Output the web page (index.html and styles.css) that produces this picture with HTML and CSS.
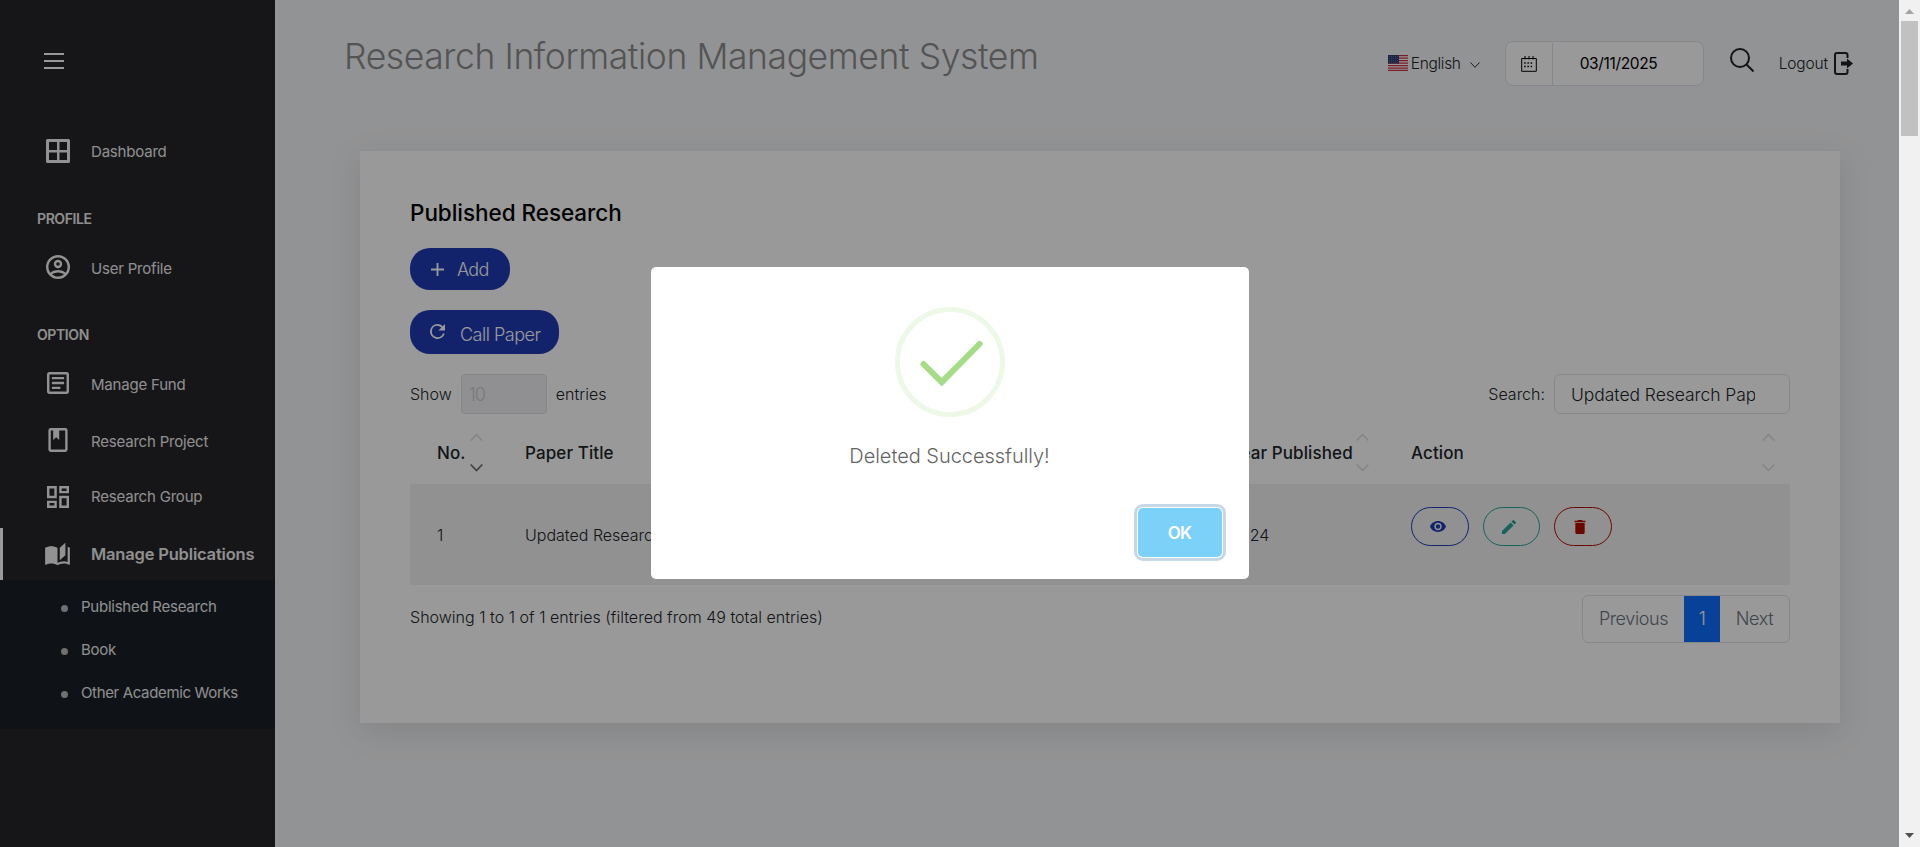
FILE: index.html
```html
<!DOCTYPE html>
<html lang="en">
<head>
<meta charset="utf-8">
<title>Research Information Management System</title>
<link rel="stylesheet" href="styles.css">
</head>
<body>
<div class="page">
  <aside class="sidebar">
    <div class="burger"><i></i><i></i><i></i></div>
    <nav>
      <a class="nav-item"><svg viewBox="0 0 24 24"><path fill-rule="evenodd" d="M1.500 0h21a1.500 1.500 0 0 1 1.500 1.500v21a1.500 1.500 0 0 1-1.500 1.500h-21a1.500 1.500 0 0 1-1.500-1.500v-21a1.500 1.500 0 0 1 1.500-1.500M3 3v8h8V3zm10.500 0v8H21V3zM3 13.500V21h8v-7.500zm10.500 0V21H21v-7.500z"/></svg><span>Dashboard</span></a>
      <h6>PROFILE</h6>
      <a class="nav-item"><svg viewBox="2 2 20 20"><path d="M12 2a10 10 0 1 0 0 20 10 10 0 0 0 0-20M7.070 18.280c.43-.9 3.050-1.780 4.930-1.780s4.500.88 4.930 1.780A7.900 7.900 0 0 1 12 20c-1.860 0-3.570-.64-4.930-1.720m11.290-1.450c-1.430-1.740-4.900-2.330-6.360-2.330s-4.930.59-6.360 2.330A7.930 7.930 0 0 1 4 12c0-4.410 3.590-8 8-8s8 3.590 8 8c0 1.820-.62 3.500-1.640 4.830M12 6a3.500 3.500 0 1 0 0 7 3.500 3.500 0 0 0 0-7m0 5a1.500 1.500 0 1 1 0-3 1.500 1.500 0 0 1 0 3"/></svg><span class="low">User Profile</span></a>
      <h6>OPTION</h6>
      <a class="nav-item"><svg class="i22" viewBox="3 3 18 18"><path d="M5 3c-1.110 0-2 .89-2 2v14c0 1.110.89 2 2 2h14c1.110 0 2-.89 2-2V5c0-1.110-.89-2-2-2zm0 2h14v14H5zm2 2v2h10V7zm0 4v2h10v-2zm0 4v2h7v-2z"/></svg><span class="low">Manage Fund</span></a>
      <a class="nav-item n56"><svg viewBox="2 2 20 20"><path d="M18 2a2 2 0 0 1 2 2v16a2 2 0 0 1-2 2H6a2 2 0 0 1-2-2V4a2 2 0 0 1 2-2zm0 2h-5v8l-2.500-2.250L8 12V4H6v16h12z"/></svg><span class="low">Research Project</span></a>
      <a class="nav-item n57"><svg class="i22" viewBox="3 3 18 18"><path d="M19 5v2h-4V5zM9 5v6H5V5zm10 8v6h-4v-6zM9 17v2H5v-2zM21 3h-8v6h8zM11 3H3v10h8zm10 8h-8v10h8zm-10 4H3v6h8z"/></svg><span>Research Group</span></a>
      <a class="nav-item active"><svg class="i26" viewBox="0 1.500 24 21"><path d="M19 2l-5 4.500v11l5-4.500zM6.500 5C4.550 5 2.450 5.400 1 6.500v14.660c0 .25.250.5.500.5.100 0 .150-.070.250-.070 1.350-.65 3.300-1.090 4.750-1.090 1.950 0 4.050.4 5.500 1.500 1.350-.85 3.800-1.500 5.500-1.500 1.650 0 3.350.31 4.750 1.060.100.050.150.030.250.030.25 0 .5-.25.500-.5V6.500c-.6-.45-1.250-.75-2-1V19c-1.100-.35-2.300-.5-3.500-.5-1.700 0-4.150.65-5.500 1.500V6.500C10.550 5.400 8.450 5 6.500 5"/></svg><span>Manage Publications</span></a>
      <div class="submenu"><a><span>Published Research</span></a><a><span>Book</span></a><a><span>Other Academic Works</span></a></div>
    </nav>
  </aside>
  <div class="main">
    <header>
      <h1>Research Information Management System</h1>
      <div class="tools">
        <div class="lang"><svg class="flag" viewBox="0 0 20 16"><path fill="#fff" d="M0 0h20v16H0z"/><path stroke="#d02c45" stroke-width="1.250" d="M0 .6h20M0 3.100h20M0 5.600h20M0 8.100h20M0 10.600h20M0 13h20M0 15.400h20"/><path fill="#2c3f73" d="M0 0h11v8.500H0z"/><path stroke="#8791ae" stroke-width=".7" stroke-dasharray=".8 1.200" d="M1 1.500h9M1 3.500h9M1 5.500h9M1 7.200h9"/></svg><span>English</span><svg class="chev" viewBox="0 0 10 6"><path d="M.5.500 5 5.300 9.500.5"/></svg></div>
        <div class="date"><div class="cal"><svg viewBox="0 0 16 16"><path fill="none" stroke="#000" d="M.7 2.500h14.600v12.800H.7zM4 0v3.500M8 0v3.500M12 0v3.500"/><path stroke="#000" stroke-width="1.500" stroke-dasharray="1.500 1.700" d="M3.200 7h9.600M3.200 10.500h9.600"/></svg></div><span>03/11/2025</span></div>
        <svg class="search" viewBox="0 0 24 24"><circle cx="10" cy="10" r="9"/><path d="m16.500 16.500 7 7"/></svg>
        <div class="logout"><span>Logout</span><svg viewBox="0 0 19 23"><path fill="none" stroke="#222" stroke-width="2" d="M13.500 6V3q0-2-2-2H3Q1 1 1 3v17q0 2 2 2h8.500q2 0 2-2v-3"/><path fill="#222" d="M7 9.500h6V6.500l6 5-6 5v-3H7z"/></svg></div>
      </div>
    </header>
    <section class="card">
      <h4>Published Research</h4>
      <a class="btn add"><svg viewBox="5 5 14 14"><path d="M19 13h-6v6h-2v-6H5v-2h6V5h2v6h6z"/></svg><span>Add</span></a>
      <a class="btn call"><svg viewBox="4 4 16 16"><path d="M17.650 6.350A7.960 7.960 0 0 0 12 4a8 8 0 1 0 7.730 10h-2.080A6 6 0 1 1 12 6c1.660 0 3.140.69 4.220 1.780L13 11h7V4z"/></svg><span>Call Paper</span></a>
      <div class="filters"><span class="show">Show</span><div class="select">10</div><span class="entries">entries</span><span class="slabel">Search:</span><div class="input"><div>Updated Research Paper</div></div></div>
      <div class="row head">
        <div class="c1"><span>No.</span><div class="sort desc"><svg viewBox="0 0 13 7"><path d="m.7 6.500 5.800-6 5.800 6"/></svg><svg viewBox="0 0 13 7"><path d="m.7.500 5.800 6 5.800-6"/></svg></div></div>
        <div class="c2"><span>Paper Title</span></div>
        <div class="c3"><span>Year Published</span><div class="sort"><svg viewBox="0 0 13 7"><path d="m.7 6.500 5.800-6 5.800 6"/></svg><svg viewBox="0 0 13 7"><path d="m.7.500 5.800 6 5.800-6"/></svg></div></div>
        <div class="c4"><span>Action</span><div class="sort"><svg viewBox="0 0 13 7"><path d="m.7 6.500 5.800-6 5.800 6"/></svg><svg viewBox="0 0 13 7"><path d="m.7.500 5.800 6 5.800-6"/></svg></div></div>
      </div>
      <div class="row body">
        <div class="c1"><span>1</span></div><div class="c2"><span>Updated Research Paper</span></div><div class="c3"><span>2024</span></div>
        <div class="c4 actions">
          <a class="act view"><svg viewBox="1 4 22 16"><path d="M12 9a3 3 0 1 0 0 6 3 3 0 0 0 0-6m0 8a5 5 0 1 1 0-10 5 5 0 0 1 0 10m0-12.500C7 4.500 2.730 7.610 1 12c1.730 4.390 6 7.500 11 7.500s9.270-3.110 11-7.500c-1.730-4.390-6-7.500-11-7.500"/></svg></a>
          <a class="act edit"><svg viewBox="3 3 18 18"><path d="M20.710 7.040c.39-.39.39-1.040 0-1.410l-2.340-2.340c-.37-.39-1.020-.39-1.410 0l-1.840 1.830 3.750 3.750M3 17.250V21h3.750L17.810 9.930l-3.750-3.750z"/></svg></a>
          <a class="act del"><svg viewBox="3 3 18 18"><path d="M19 4h-3.500l-1-1h-5l-1 1H5v2h14M6 19a2 2 0 0 0 2 2h8a2 2 0 0 0 2-2V7H6z"/></svg></a>
        </div>
      </div>
      <div class="foot"><span class="info">Showing 1 to 1 of 1 entries (filtered from 49 total entries)</span><div class="pager"><a>Previous</a><a class="cur">1</a><a>Next</a></div></div>
    </section>
  </div>
</div>
<div class="overlay">
  <div class="modal">
    <svg class="ok-icon" viewBox="0 0 110 110"><circle cx="55" cy="55" r="52.500" fill="none" stroke="#edf8e7" stroke-width="5"/><path d="m28.500 57 18.200 18.200L84.500 37" fill="none" stroke="#a5dc86" stroke-width="6" stroke-linecap="round"/></svg>
    <p>Deleted Successfully!</p>
    <div class="modal-foot"><button>OK</button></div>
  </div>
</div>
<div class="scrollbar"><svg viewBox="0 0 9 5"><path d="M0 5 4.500 0 9 5z" fill="#a3a3a3"/></svg><div class="thumb"></div><svg viewBox="0 0 9 5"><path d="M0 0h9L4.500 5z" fill="#505050"/></svg></div>
</body>
</html>
```
FILE: styles.css
```css
*{box-sizing:border-box}
body{margin:0;height:847px;overflow:hidden;font-family:Inter,"Liberation Sans",sans-serif;color:#212529;font-weight:300}
.page{display:flex;height:847px;width:1899px;background:#f4f5f7}
span{white-space:nowrap}
.sidebar{width:275px;flex:none;background:#252528;color:#fff}
.burger{padding:53px 0 0 44px;height:122px;display:flex;flex-direction:column;gap:5px}
.burger i{width:20px;height:2px;background:#fff}
.nav-item{display:flex;align-items:center;height:58px;padding-left:46px;font-size:15px;font-weight:400;letter-spacing:-.2px;color:#eee}
.nav-item svg{width:24px;height:24px;fill:#f4f4f4;margin-right:21px}
.nav-item .i22{width:22px;height:22px;margin:0 22px 0 1px}
.nav-item .i26{width:27px;height:24px;margin:0 21px 0 -2px}
.nav-item .low{margin-top:2px}
.n57{height:57px}.n56{height:56px}
.sidebar h6{margin:0;height:58px;padding:30px 0 0 37px;font-size:14px;line-height:17px;font-weight:600;letter-spacing:-.4px;color:#eee}
.active{height:52px;border-left:3px solid #fff;padding-left:43px;font-size:16.5px;font-weight:600;letter-spacing:-.18px;margin-top:3px}
.active .i26{margin-right:20px}
.submenu{height:149px;background:#191e25;padding-top:5px}
.submenu a{display:flex;align-items:center;height:43px;padding-left:61px;font-size:15px;letter-spacing:-.25px;color:#eee;font-weight:400}
.submenu a:last-child{letter-spacing:-.35px}
.submenu a:before{content:"";width:7px;height:7px;border-radius:50%;background:#bbb;margin:3px 13px 0 0}
.main{flex:1;padding:0 59px 0 85px}
header{display:flex;height:151px;margin:0 -13px 0 -16px;justify-content:space-between}
h1{margin:33px 0 0;font-size:35.5px;line-height:48px;font-weight:300;color:#8d8d8d;letter-spacing:-.42px;white-space:nowrap}
.tools{display:flex;font-size:15.5px;align-items:flex-start}
.lang{display:flex;align-items:center;margin-top:53px;height:20px;letter-spacing:-.3px}
.flag{width:20px;height:16px;margin-right:3px}
.chev{width:10px;height:6px;margin-left:9px;fill:none;stroke:#333;margin-top:3px}
.date{display:flex;align-items:center;width:199px;height:45px;margin:41px 0 0 25px;border:1px solid #dee2e6;border-radius:8px;background:#fff;font-weight:400;color:#000;letter-spacing:-.35px}
.cal{width:47px;height:42px;border-right:1px solid #dee2e6;display:flex;align-items:center;justify-content:center;margin-right:27px}
.cal svg{width:16px;height:16px}
.search{width:24px;height:24px;margin:48px 25px 0 26px;fill:none;stroke:#222;stroke-width:2}
.logout{display:flex;align-items:center;margin-top:51px;height:24px;letter-spacing:-.15px}
.logout svg{width:19px;height:23px;margin-left:6px}
.card{width:1480px;height:572px;background:#fff;padding:49px 50px;box-shadow:0 8px 32px rgba(0,0,0,.1);display:flex;flex-direction:column;align-items:flex-start}
h4{margin:0 0 23px;font-size:22.5px;line-height:25px;font-weight:500;letter-spacing:-.05px;color:#000}
.btn{display:flex;align-items:center;background:#1f3bb3;border-radius:20px;color:#fff;font-size:18px;flex:none}
.btn svg{fill:#fff;flex:none}
.add{width:100px;height:42px;padding-left:21px;letter-spacing:-.7px;margin-bottom:20px}
.add svg{width:13px;height:13px;margin-right:13px}
.call{width:149px;height:44px;padding-left:20px;letter-spacing:-.5px}
.call svg{width:15px;height:15px;margin:-2px 15px 0 0}
.call span{margin-top:5px}
.filters{display:flex;width:1380px;height:40px;margin-top:20px;align-items:center;font-size:16px;letter-spacing:0}
.select{width:86px;height:40px;border:1px solid #dee2e6;border-radius:4px;background:#f0f1f6;color:#c9c8c8;margin:0 9px;padding:10px 7px;font-size:18px;line-height:20px;letter-spacing:-1px}
.slabel{margin:0 9px 0 auto}
.input{width:236px;height:40px;border:1px solid #dee2e6;border-radius:6px;padding:10px 34px 8px 16px;font-size:17.5px;line-height:20px;letter-spacing:-.05px}
.input div{overflow:hidden;white-space:nowrap}
.row{display:flex;width:1380px}
.head{height:70px;font-size:17px;font-weight:500;letter-spacing:.1px}
.row>div{display:flex;align-items:center;height:100%}
.c1{width:88px;padding-left:27px}.c2{width:705px;padding-left:27px}.c3{width:181px;padding-left:27px}.c4{width:406px;padding-left:27px;padding-right:14px}
.head span{margin-top:8px}
.sort{display:flex;flex-direction:column;gap:23px;margin-left:4px;margin-top:6px}
.head .c4{justify-content:space-between}
.head .c3 .sort{margin-left:auto;margin-right:15px}
.head .c4 .sort{margin-right:1px}
.sort svg{width:13px;height:7px;fill:none;stroke:#dcdcdc;stroke-width:1.500;overflow:visible}
.desc svg:last-child{stroke:#6a6a6a;stroke-width:1.600}
.body{height:101px;background:#f2f2f2;font-size:16px;letter-spacing:0}
.row>.actions{gap:14px;align-items:flex-start;padding-top:23px}
.act{width:58px;height:39px;border:1px solid;border-radius:20px;padding:12px 0 0 18px}
.act svg{width:16px;height:14px;fill:currentColor;display:block}
.view{color:#1f3bb3}.edit{color:#26a69a}.del{color:#b50d00}
.act.view svg{height:13px}
.act.edit{width:57px;padding-left:17px}
.act.del{padding-left:17px}
.foot{display:flex;width:1380px;justify-content:space-between;margin-top:10px;font-size:16px;letter-spacing:.02px}
.info{margin-top:12px}
.pager{display:flex;height:48px;border:1px solid #dee2e6;border-radius:6px;font-size:18px;color:#6c757d;line-height:46px;text-align:center;letter-spacing:-.4px}
.pager a{width:101px}.pager a:last-child{width:69px}.pager .cur{width:36px;background:#0d6efd;color:#fff}
.overlay{position:absolute;left:0;top:0;width:1899px;height:847px;background:rgba(0,0,0,.4);display:flex;align-items:center;justify-content:center}
.modal{width:598px;height:312px;background:#fff;border-radius:5px;display:flex;flex-direction:column;align-items:center;margin-top:-1px}
.ok-icon{width:110px;height:110px;margin-top:40px;flex:none}
.modal p{margin:26px 0 0;font-size:20px;line-height:26px;color:#646464;letter-spacing:-.04px}
.modal-foot{align-self:stretch;display:flex;justify-content:flex-end;padding:39px 27px 0 0}
button{width:84px;height:49px;background:#7cd1f9;border:0;border-radius:5px;box-shadow:0 0 0 1px #fff,0 0 0 4px #c6d8e7;font:600 17px Inter,sans-serif;color:#fff;letter-spacing:-.7px}
.scrollbar{position:absolute;right:0;top:0;width:21px;height:847px;background:#f1f1f1;display:flex;flex-direction:column;align-items:center}
.scrollbar svg{width:9px;height:5px;margin:9px 0 7px}
.scrollbar svg:last-child{margin:8px 0 9px}
.thumb{width:17px;height:115px;background:#c1c1c1;margin-bottom:auto}
```
